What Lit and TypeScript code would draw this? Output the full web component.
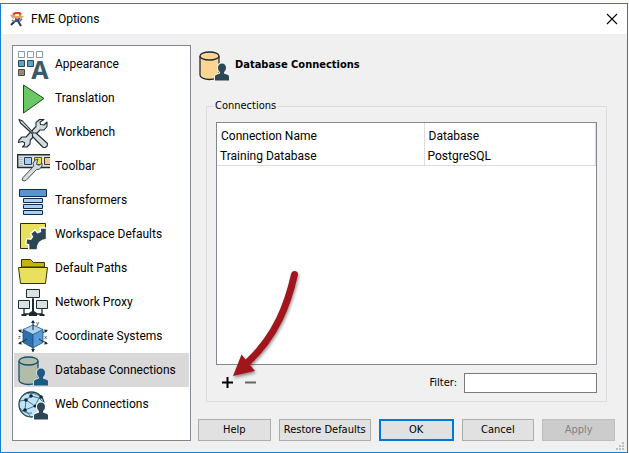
import { LitElement, html, svg, css, type TemplateResult } from "lit";
import { customElement, property, state } from "lit/decorators.js";
import { classMap } from "lit/directives/class-map.js";

const person = (fill: string, halo: string) => svg`
  <path d="M24 14.500c2.500 0 4 1.800 4 4.200 0 1.900-.8 3.300-2 4.200v1.600l4 1.500c.8.400 1 1 1 2v3.500H17V28c0-1 .3-1.600 1-2l4-1.500v-1.600c-1.200-.9-2-2.300-2-4.200 0-2.400 1.500-4.200 4-4.200z"
    fill="${fill}" stroke="${halo}" stroke-width="2" paint-order="stroke"/>`;

const database = (body: string, line: string, who: string, halo: string) => svg`
  <path d="M2 7v19c0 2.500 4 4.500 9.500 4.500S21 28.500 21 26V7" fill="${body}" stroke="${line}" stroke-width="1.300"/>
  <ellipse cx="11.500" cy="7" rx="9.500" ry="4" fill="${body}" stroke="${line}" stroke-width="1.300"/>
  ${person(who, halo)}`;

const icons: Record<string, TemplateResult> = {
  appearance: svg`
    <g fill="#fff" stroke="#8b9a9f"><path d="M1.500 3.500h6v6h-6zM10.500 3.500h6v6h-6zM19.500 3.500h6v6h-6z"/></g>
    <path d="M1.500 12.500h6v6h-6zM10.500 12.500h6v6h-6z" fill="#5fa3c7" stroke="#24495c"/>
    <path d="M1.500 21.500h6v6h-6z" fill="#9c8a70" stroke="#4b4a45"/>
    <text class="glyph-a" x="23" y="31" text-anchor="middle">A</text>`,
  translation: svg`<path d="M6.500 3v28L27 16.500z" fill="#6cc865" stroke="#1d4a24"/>`,
  workbench: svg`
    <g fill="#d5dcde" stroke="#1f2e36" stroke-width="1.100" stroke-linejoin="round">
      <path d="M27 3.500h-4.500L19 6.500V10.500L9 21H5L2 24l-.5 2.500L5 25.500l2.500 1V29L5.500 31H10l3-3 .3-4L23 14h4l3-3.500V6l-3 3-3.500-.5-.5-2.500z"/>
      <path d="M2 3.500L5.500 5 16.500 17h2.500L30.500 27.500l-.3 2.500-2 1.500h-2L15.500 20.500V18L3.500 7z"/>
    </g>`,
  toolbar: svg`
    <path d="M33 4.700H.700v12.800H33" fill="#dbe2e3" stroke="#1f2e36" stroke-width="1.400"/>
    <path d="M3 7v9M5 7v9" stroke="#8b989e" stroke-dasharray="1 1"/>
    <path d="M7.500 7.500h7v7h-7z" fill="#a9cdf3" stroke="#1f3d5c"/>
    <path d="M17.500 7.500h7v7h-7z" fill="#f0e04c" stroke="#5c561f"/>
    <path d="M33 7.500h-5.500v7H33" fill="#f3c795" stroke="#4a3524"/>
    <path d="M21 9l-3 1.200-2 3 .7 3L6 27.500 5 30l2 1 2-.5L19.500 19.500l3-.3 2.500-3.200V13l-2.800 2.200-2.500-.7.300-2.500z" fill="#d5dcde" stroke="#3d4d55" stroke-linejoin="round"/>`,
  transformers: svg`
    <path d="M2.500 5.500h27v7h-27z" fill="#5694d3" stroke="#0f2c50"/>
    <path d="M6.500 14.500h19v4h-19zM6.500 20.500h19v4h-19zM6.500 26.500h19v4h-19z" fill="#abcff5" stroke="#0f2c50"/>`,
  workspace: svg`
    <path d="M3.500 5.500h25v25h-25z" fill="#e9e15c" stroke="#2c2c10"/>
    <path d="M29.500 10h-6.500l.5 3.500-3 1.200-2.500-3-4.500 4 2 3-1.800 2.500-4-.7-1 5 3 1.500v5h8.500c0-6 3-10 9.300-10.500z" fill="#2d4654" stroke="#fff" stroke-width="1.400"/>
    <path d="M20.500 32c.5-6 3.500-9.500 9.500-10v10z" fill="#fff"/>`,
  paths: svg`
    <path d="M4.500 15V7.500h9l3 3h11V15z" fill="#c2b504" stroke="#37340a"/>
    <path d="M1.500 15.500h29l-2 16h-25z" fill="#e9e15c" stroke="#37340a"/>`,
  network: svg`
    <path d="M16 12v15M7 23v5h18v-5" fill="none" stroke="#1c2b33" stroke-width="1.300"/>
    <path d="M15 13h2v12l3 2v3h-8v-3l3-2zM4.500 28h5v2h-5zM22.500 28h5v2h-5z" fill="#1c2b33"/>
    <path d="M9.500 3.500h13v8h-13zM1.500 14.500h11v8h-11zM19.500 14.500h11v8h-11z" fill="#d9e1e2" stroke="#1c2b33"/>`,
  coordinate: svg`
    <path d="M16 1v31M2 11l5 2M30 11l-5 2M2 23l5-2M30 23l-5-2" stroke="#14283a" fill="none"/>
    <path d="M14 3l2-3 2 3zM14 29l2 3 2-3zM1 10l4-.5-1.500 3zM31 10l-4-.5 1.500 3zM1 24l4 .5-1.500-3zM31 24l-4 .5 1.500-3z" fill="#14283a"/>
    <path d="M16 5l10 4.500-10 5-10-5z" fill="#a8d2f2"/>
    <path d="M6 9.500l10 5V28L6 22.500z" fill="#2f6fae"/>
    <path d="M26 9.500l-10 5V28l10-5.500z" fill="#5a9bd8"/>
    <path d="M16 5l10 4.500v13L16 28 6 22.500v-13zM6 9.500l10 5 10-5M16 14.500V28" fill="none" stroke="#173f68" stroke-width=".7"/>
    <path d="M16 5v5M10 19l-4 2.500M22 19l4 2.500" stroke="#14283a"/>
    <g class="axis"><text x="19" y="5">y</text><text x="1" y="19">z</text><text x="27" y="19">x</text></g>`,
  database: database("#b1bda9", "#1c506e", "#1c5a85", "#d9d9d9"),
  heading: database("#fdd592", "#1c2b33", "#2d4654", "#f0f0f0"),
  web: svg`
    <circle cx="14.500" cy="16.500" r="12.500" fill="#bfe5fb" stroke="#24434f" stroke-width="1.300"/>
    <path d="M3 13L9 12l5-4 8 2 4 4M9 12l-1 10-3 1M8 22l10-4 4-8M14 4v4M9 12l9 6M8 22l6 7M3 20c2 3 7 6 12 5M6 7c6-3 12-2 18 2" fill="none" stroke="#3b6878" stroke-width=".9"/>
    <g fill="#142630"><circle cx="9" cy="12" r="1.800"/><circle cx="14" cy="8" r="1.800"/><circle cx="24" cy="9" r="1.800"/><circle cx="8" cy="22" r="1.800"/><circle cx="18" cy="18" r="1.500"/></g>
    ${person("#2d4654", "#fff")}`,
};

@customElement("option-icon")
class OptionIcon extends LitElement {
  @property() name = "";
  static styles = css`
    :host { display: block; flex: none; width: 32px; height: 32px; }
    svg { display: block; width: 100%; height: 100%; }
    .glyph-a { font: bold 25px "Noto Sans", sans-serif; fill: #3a5a6c; }
    .axis { font: 6px "Noto Sans", sans-serif; fill: #14283a; }
    svg { overflow: visible; }
  `;
  render() {
    return html`<svg viewBox="0 0 32 32" aria-hidden="true">${icons[this.name]}</svg>`;
  }
}

const pages = [
  ["appearance", "Appearance"],
  ["translation", "Translation"],
  ["workbench", "Workbench"],
  ["toolbar", "Toolbar"],
  ["transformers", "Transformers"],
  ["workspace", "Workspace Defaults"],
  ["paths", "Default Paths"],
  ["network", "Network Proxy"],
  ["coordinate", "Coordinate Systems"],
  ["database", "Database Connections"],
  ["web", "Web Connections"],
];

@customElement("app-root")
class AppRoot extends LitElement {
  @state() private current = "database";

  static styles = css`
    :host {
      display: block; box-sizing: border-box; min-height: 100vh; padding: 3px 1px 0 0;
      background: #fff; color: #000; font: 11px/14px "DejaVu Sans Condensed", "DejaVu Sans", sans-serif;
    }
    * { box-sizing: border-box; }
    button, input { font: inherit; color: inherit; }
    .window {
      position: relative; display: flex; flex-direction: column;
      min-height: calc(100vh - 3px); border: 1px solid #1a7fd0; background: #f0f0f0;
    }
    .titlebar { display: flex; align-items: center; gap: 6px; height: 30px; padding: 0 7px 0 8px; background: #fff; }
    .titlebar h1 { flex: 1; margin: 0; }
    .titlebar h1, .page, table { font: 12px/16px Roboto, "Noto Sans", sans-serif; }
    .logo { width: 16px; height: 16px; }
    .close { display: flex; padding: 2px; border: 0; background: none; }
    .close svg { width: 12px; height: 12px; }
    .body { flex: 1; display: flex; gap: 7px; padding: 11px 12px 11px 11px; }
    nav { flex: none; width: 179px; border: 1px solid #828790; padding: 1px; background: #fff; }
    .page {
      display: flex; align-items: center; gap: 6px; width: 100%; height: 34px; padding: 0 3px;
      border: 0; background: none; text-align: left; white-space: nowrap;
    }
    .page.selected { background: #d9d9d9; }
    main { flex: 1; min-width: 0; display: flex; flex-direction: column; }
    header { display: flex; align-items: center; gap: 5px; padding-top: 4px; }
    h2 { margin: 0; font-size: 11px; line-height: 16px; font-weight: bold; }
    fieldset {
      position: relative; flex: 1; display: flex; flex-direction: column; min-width: 0;
      margin: 18px 8px 17px; border: 1px solid #dcdcdc; padding: 9px 9px 8px;
    }
    legend { padding: 0 2px; margin-left: -3px; }
    .list { flex: 1; border: 1px solid #828790; background: #fff; }
    table { width: 100%; border-collapse: collapse; table-layout: fixed; }
    th, td { padding: 2px 3px 0; border-right: 1px solid #dcdcdc; text-align: left; font-weight: normal; }
    th { height: 23px; padding: 2px 4px 0; }
    td { height: 19px; border-bottom: 1px solid #dcdcdc; }
    .name { width: 207px; }
    .tools { display: flex; align-items: center; height: 21px; margin-top: 7px; padding-left: 1px; }
    .tool { display: flex; padding: 5px; margin-right: 2px; border: 0; background: none; }
    .tool svg { width: 11px; height: 11px; }
    .filter { display: flex; align-items: center; gap: 7px; margin-left: auto; }
    .filter input { width: 133px; height: 20px; border: 1px solid #7a7a7a; background: #fff; padding: 0 4px; }
    .pointer { position: absolute; left: 20px; bottom: 16px; width: 84px; height: 120px; pointer-events: none; }
    footer { display: flex; gap: 8px; }
    footer button { flex: 73 1 0; height: 22px; padding: 0; border: 1px solid #adadad; background: #e1e1e1; white-space: nowrap; }
    footer .wide { flex-grow: 93; }
    footer .primary { border: 2px solid #0078d7; }
    footer button:disabled { background: #ccc; border-color: #bfbfbf; color: #838383; }
    .grip { position: absolute; right: 3px; bottom: 2px; width: 8px; height: 8px; }
  `;

  render() {
    return html`
      <div class="window">
        <div class="titlebar">
          <svg class="logo" viewBox="0 0 16 16" aria-hidden="true">
            <path d="M1 4l4-1 2 3-3 2zM15 5l-4 0-2 3 2 1z" fill="#c9a98c"/>
            <path d="M6 7l5 0-1 4H6z" fill="#3556a5"/>
            <path d="M6 10l-4 4M9 10l3 5" stroke="#26365c" stroke-width="2"/>
            <path d="M3 9l3 2M13 8l-3 3" stroke="#6b7076" stroke-width="1.500"/>
            <path d="M4 2l4-1 4 2 1 3-5 2-4-2z" fill="#e8a25e"/>
            <path d="M3 3l3-2 5 0 2 2-3 1-4 0z" fill="#df3f27"/>
            <path d="M6 3h4v2H6z" fill="#fff3c8"/>
          </svg>
          <h1>FME Options</h1>
          <button class="close" aria-label="Close">
            <svg viewBox="0 0 12 12"><path d="M1 1l10 10M11 1L1 11" stroke="#000" stroke-width="1.100"/></svg>
          </button>
        </div>
        <div class="body">
          <nav aria-label="Option pages">
            ${pages.map(([id, label]) => html`
              <button class=${classMap({ page: true, selected: id === this.current })}
                @click=${() => (this.current = id)}>
                <option-icon name=${id}></option-icon>${label}
              </button>`)}
          </nav>
          <main>
            <header><option-icon name="heading"></option-icon><h2>Database Connections</h2></header>
            <fieldset>
              <legend>Connections</legend>
              <div class="list">
                <table>
                  <thead><tr><th class="name">Connection Name</th><th>Database</th></tr></thead>
                  <tbody><tr><td>Training Database</td><td>PostgreSQL</td></tr></tbody>
                </table>
              </div>
              <div class="tools">
                <button class="tool" aria-label="Add connection">
                  <svg viewBox="0 0 11 11"><path d="M5.500 0v11M0 5.500h11" stroke="#000" stroke-width="2"/></svg>
                </button>
                <button class="tool" aria-label="Remove connection">
                  <svg viewBox="0 0 11 11"><path d="M0 5.500h11" stroke="#666" stroke-width="2"/></svg>
                </button>
                <label class="filter">Filter: <input type="text"></label>
              </div>
              <svg class="pointer" viewBox="0 0 84 120" aria-hidden="true">
                <defs><filter id="shade" x="-20%" y="-20%" width="150%" height="150%">
                  <feDropShadow dx="1" dy="2" stdDeviation="1.500" flood-color="#000" flood-opacity=".4"/>
                </filter></defs>
                <g filter="url(#shade)">
                  <path d="M67.500 9.500C61 38 50 70 20 98" fill="none" stroke="#a0151f" stroke-width="7" stroke-linecap="round"/>
                  <path d="M6 111l8.500-21.500L28 106z" fill="#a0151f"/>
                </g>
              </svg>
            </fieldset>
            <footer>
              <button>Help</button>
              <button class="wide">Restore Defaults</button>
              <button class="primary">OK</button>
              <button>Cancel</button>
              <button disabled>Apply</button>
            </footer>
          </main>
        </div>
        <svg class="grip" viewBox="0 0 8 8" aria-hidden="true">
          <path d="M6 0h2v2H6zM3 3h2v2H3zM6 3h2v2H6zM0 6h2v2H0zM3 6h2v2H3zM6 6h2v2H6z" fill="#bfbfbf"/>
        </svg>
      </div>`;
  }
}
